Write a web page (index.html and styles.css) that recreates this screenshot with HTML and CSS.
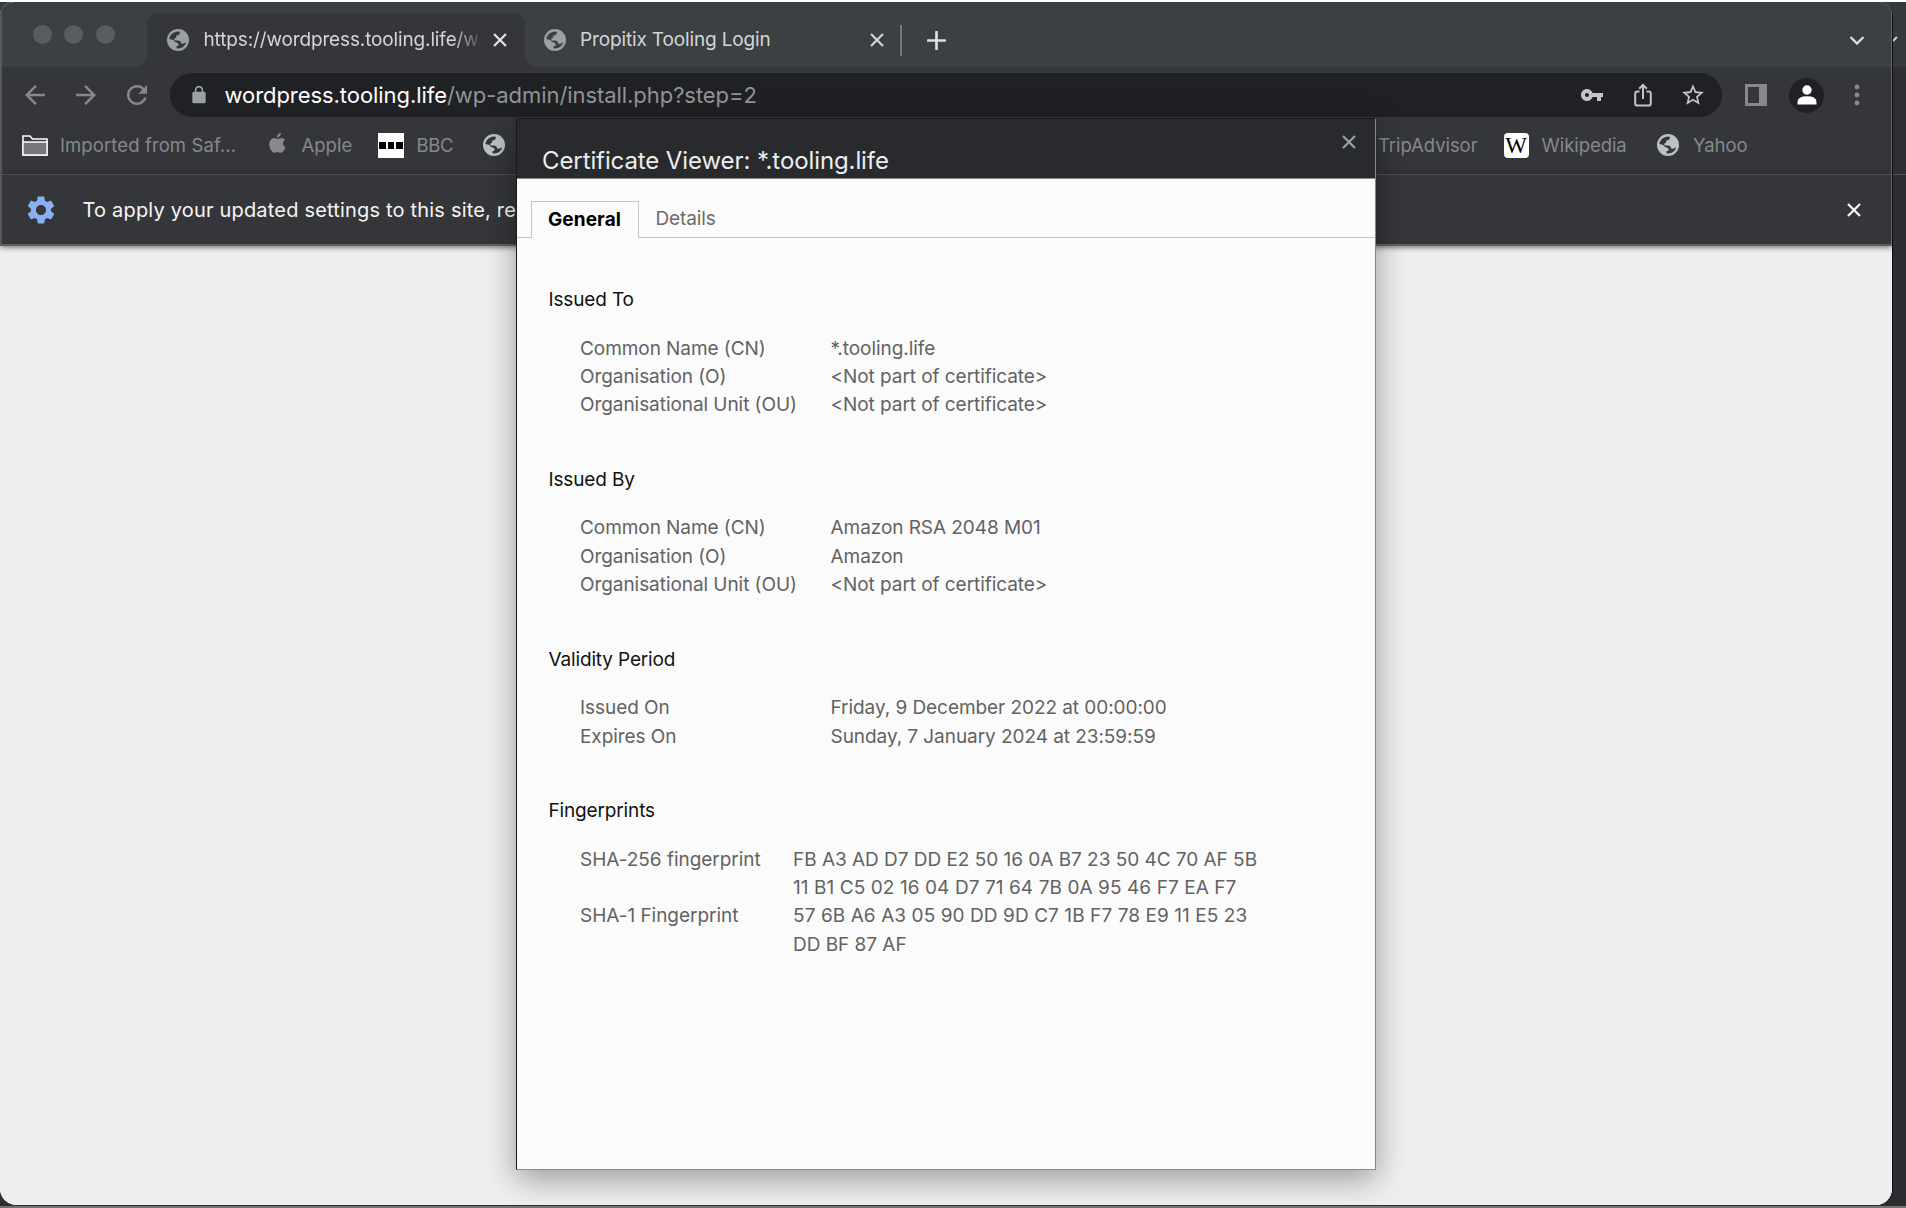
FILE: index.html
```html
<!DOCTYPE html>
<html lang="en">
<head>
<meta charset="utf-8">
<title>Certificate Viewer</title>
<link rel="stylesheet" href="styles.css">
</head>
<body>
<svg width="0" height="0" class="defs">
  <symbol id="globe" viewBox="0 0 22 22">
    <circle cx="11" cy="11" r="11" fill="currentColor"/>
    <path d="M2.4 10C2.8 6 6.400 2.700 11 2.500l2 .4-.5 2.100-1.300 1.200-2 .2v2.200l-1.800.9v2h4.200l1.900 1.100.6 1.900 2.100.2 3-1.400C18.300 17 15 19.500 11 19.500l-1.500-.3v-1.900l1.900-.5.3-1.700-1.700-1.700-2.200-.3-1.400-2.100z" fill="var(--hole)"/>
  </symbol>
  <symbol id="cross" viewBox="0 0 14 14">
    <path d="M1 1l12 12M13 1L1 13" fill="none" stroke="currentColor" stroke-width="2.200"/>
  </symbol>
</svg>

<div class="backdrop">
  <div class="back-tabs"><svg width="5" height="9" viewBox="0 0 5 9"><path d="M0 6l4-4" stroke="#d0d2d4" stroke-width="2"/></svg></div>
  <div class="back-tools"></div>
  <div class="back-page"></div>
</div>

<div class="window">
  <div class="tabstrip">
    <div class="lights"><i></i><i></i><i></i></div>
    <div class="tab active">
      <svg class="globe"><use href="#globe"/></svg>
      <span class="tab-title fade">https://wordpress.tooling.life/w</span>
      <svg class="x"><use href="#cross"/></svg>
    </div>
    <div class="tab second">
      <svg class="globe"><use href="#globe"/></svg>
      <span class="tab-title">Propitix Tooling Login</span>
      <svg class="x"><use href="#cross"/></svg>
    </div>
    <div class="tab-sep"></div>
    <svg class="plus" width="19" height="19" viewBox="0 0 19 19"><path d="M9.500 1v17M1 9.500h17" stroke="#dcdee0" stroke-width="2.700" stroke-linecap="round"/></svg>
    <svg class="chevron" width="16" height="11" viewBox="0 0 16 11"><path d="M1.500 2L8 8.600 14.500 2" fill="none" stroke="#d9dbdd" stroke-width="2.300"/></svg>
  </div>

  <div class="toolbar">
    <svg class="nav" viewBox="0 0 24 24"><path d="M20 11H7.830l5.590-5.590L12 4l-8 8 8 8 1.410-1.410L7.830 13H20v-2z"/></svg>
    <svg class="nav" viewBox="0 0 24 24"><path d="M12 4l-1.410 1.410L16.170 11H4v2h12.170l-5.580 5.590L12 20l8-8z"/></svg>
    <svg class="nav" viewBox="0 0 24 24"><path d="M17.650 6.350C16.200 4.900 14.210 4 12 4c-4.420 0-7.990 3.580-7.990 8s3.570 8 7.990 8c3.730 0 6.840-2.550 7.730-6h-2.080c-.82 2.330-3.040 4-5.650 4-3.310 0-6-2.690-6-6s2.690-6 6-6c1.660 0 3.140.69 4.220 1.780L13 11h7V4l-2.350 2.350z"/></svg>
    <div class="omnibox">
      <svg class="lock" viewBox="0 0 24 24"><path d="M18 8h-1V6c0-2.760-2.240-5-5-5S7 3.240 7 6v2H6c-1.100 0-2 .9-2 2v10c0 1.100.9 2 2 2h12c1.100 0 2-.9 2-2V10c0-1.100-.9-2-2-2zM8.900 8V6c0-1.710 1.390-3.100 3.100-3.100s3.100 1.390 3.100 3.100v2z"/></svg>
      <span class="url"><b>wordpress.tooling.life</b>/wp-admin/install.php?step=2</span>
      <svg class="key" viewBox="0 0 24 24"><path d="M12.650 10C11.830 7.670 9.610 6 7 6c-3.310 0-6 2.690-6 6s2.690 6 6 6c2.610 0 4.830-1.670 5.650-4H17v4h4v-4h2v-4H12.650zM7 14c-1.100 0-2-.9-2-2s.9-2 2-2 2 .9 2 2-.9 2-2 2z"/></svg>
      <svg class="share" viewBox="0 0 18 24"><path d="M5.500 8.500H3.300Q1.200 8.500 1.200 10.600V20.400Q1.200 22.500 3.300 22.500H14.700Q16.800 22.500 16.800 20.400V10.600Q16.800 8.500 14.700 8.500H12.500M9 16V2M5.200 5.700L9 1.900l3.800 3.800"/></svg>
      <svg class="star" viewBox="0 0 24 24"><path d="M22 9.240l-7.190-.62L12 2 9.190 8.630 2 9.240l5.460 4.730L5.820 21 12 17.270 18.180 21l-1.630-7.030L22 9.240zM12 15.400l-3.760 2.270 1-4.280-3.320-2.880 4.380-.38L12 6.100l1.710 4.040 4.380.38-3.320 2.880 1 4.280L12 15.400z"/></svg>
    </div>
    <svg class="panel" viewBox="0 0 22 22"><path fill-rule="evenodd" d="M0 0h22v22H0zM3 3v16h11V3z"/></svg>
    <div class="avatar"><svg width="20" height="20" viewBox="0 0 20 20"><circle cx="10" cy="5" r="4.700" fill="#fff"/><path d="M.5 19.500V17Q.5 11.300 10 11.300T19.500 17v2.500z" fill="#fff"/></svg></div>
    <svg class="dots" viewBox="0 0 6 22"><circle cx="3" cy="3" r="2.400"/><circle cx="3" cy="11" r="2.400"/><circle cx="3" cy="19" r="2.400"/></svg>
  </div>

  <div class="bookmarks">
    <svg class="folder" viewBox="0 0 26 21"><path d="M1 20V1h7l2.500 3H25v16z" fill="#36373b" stroke="#fff" stroke-width="1.500"/><path d="M1 7h24v13H1z" fill="#77787b" stroke="#fff" stroke-width="1.300"/></svg>
    <span class="bm-folder">Imported from Saf...</span>
    <svg class="apple" viewBox="0 0 17 21"><path d="M11.900 0c.2 2.300-1.700 4.400-3.900 4.400C7.700 2.200 9.700.2 11.900 0zM8.600 5.900c.9 0 2-1 3.800-1 1.500 0 2.900.8 3.600 2-3 1.800-2.600 5.900.6 7.200-.8 2.300-2.600 5.600-4.500 5.600-1.300 0-1.800-.8-3.400-.8s-2.200.8-3.400.8C3 19.700.3 15.300.3 11.300c0-4 2.500-6.300 4.900-6.300 1.500 0 2.600.9 3.400.9z"/></svg>
    <span class="bm-apple">Apple</span>
    <span class="bbc"><i></i><i></i><i></i></span>
    <span class="bm-bbc">BBC</span>
    <svg class="globe bm-globe"><use href="#globe"/></svg>
    <div class="bm-right">
      <span>TripAdvisor</span>
      <span class="wiki">W</span>
      <span class="bm-wiki">Wikipedia</span>
      <svg class="globe"><use href="#globe"/></svg>
      <span class="bm-yahoo">Yahoo</span>
    </div>
  </div>

  <div class="infobar">
    <svg class="gear" viewBox="2 2 20 20"><path d="M19.140 12.940c.04-.3.060-.61.060-.94 0-.32-.02-.64-.07-.94l2.030-1.580c.18-.14.230-.41.120-.61l-1.920-3.320c-.12-.22-.37-.29-.59-.22l-2.390.96c-.5-.38-1.030-.7-1.620-.94l-.36-2.540c-.04-.24-.24-.41-.48-.41h-3.840c-.24 0-.43.17-.47.41l-.36 2.540c-.59.240-1.130.57-1.620.94l-2.390-.96c-.22-.08-.47 0-.59.22L2.740 8.870c-.12.210-.08.470.12.610l2.030 1.580c-.05.3-.09.63-.09.94s.02.640.07.940l-2.030 1.580c-.18.140-.23.410-.12.610l1.920 3.320c.12.220.37.290.59.220l2.390-.96c.5.380 1.030.7 1.620.94l.36 2.540c.05.240.24.410.48.410h3.840c.24 0 .44-.17.47-.41l.36-2.540c.59-.24 1.130-.56 1.620-.94l2.390.96c.22.080.47 0 .59-.22l1.920-3.320c.12-.22.070-.47-.12-.61l-2.010-1.580zM12 15.600c-1.980 0-3.600-1.620-3.600-3.600s1.620-3.600 3.600-3.600 3.600 1.620 3.600 3.600-1.620 3.600-3.600 3.600z"/></svg>
    <span class="message">To apply your updated settings to this site, re</span>
    <svg class="x"><use href="#cross"/></svg>
  </div>

  <div class="page"></div>

  <div class="dialog">
    <div class="dialog-head">
      <h1>Certificate Viewer: *.tooling.life</h1>
      <svg class="x"><use href="#cross"/></svg>
    </div>
    <div class="dialog-tabs"><span class="on">General</span><span class="off">Details</span></div>
    <div class="details">
      <section><h2>Issued To</h2>
        <dl><dt>Common Name (CN)</dt><dd>*.tooling.life</dd>
        <dt>Organisation (O)</dt><dd>&lt;Not part of certificate&gt;</dd>
        <dt>Organisational Unit (OU)</dt><dd>&lt;Not part of certificate&gt;</dd></dl></section>
      <section><h2>Issued By</h2>
        <dl><dt>Common Name (CN)</dt><dd>Amazon RSA 2048 M01</dd>
        <dt>Organisation (O)</dt><dd>Amazon</dd>
        <dt>Organisational Unit (OU)</dt><dd>&lt;Not part of certificate&gt;</dd></dl></section>
      <section><h2>Validity Period</h2>
        <dl><dt>Issued On</dt><dd>Friday, 9 December 2022 at 00:00:00</dd>
        <dt>Expires On</dt><dd>Sunday, 7 January 2024 at 23:59:59</dd></dl></section>
      <section><h2>Fingerprints</h2>
        <dl class="prints"><dt>SHA-256 fingerprint</dt><dd>FB A3 AD D7 DD E2 50 16 0A B7 23 50 4C 70 AF 5B<br><span class="wide">11 B1 C5 02 16 04 D7 71 64 7B 0A 95 46 F7 EA F7</span></dd>
        <dt>SHA-1 Fingerprint</dt><dd><span class="wide">57 6B A6 A3 05 90 DD 9D C7 1B F7 78 E9 11 E5 23</span><br>DD BF 87 AF</dd></dl></section>
    </div>
  </div>
</div>
</body>
</html>
```
FILE: styles.css
```css
* { box-sizing: border-box; }
body {
  margin: 0; width: 1906px; height: 1208px; overflow: hidden; position: relative;
  font-family: "Inter", "Liberation Sans", sans-serif; font-size: 19px;
  background: #fff; padding-top: 2px;
}
svg { display: block; flex: none; }
span { white-space: nowrap; }
.defs { position: absolute; }

/* edge of the window that sits behind this one */
.backdrop { position: absolute; inset: 2px 0 0 0; background: #2d2e32; border-bottom: 2px solid #747474; }
.back-tabs { height: 65px; background: #373a3d; padding: 33px 0 0 1893px; }
.back-tools { height: 108px; background: #2f3034; border-bottom: 1px solid #55565a; }

.window {
  position: relative; width: 1893px; height: 1204px; overflow: hidden;
  display: flex; flex-direction: column;
  border-radius: 14px 14px 17px 17px; background: #efefef;
  border-right: 1px solid #0c0c0d; border-bottom: 1px solid #303030;
}
.window > .tabstrip, .window > .toolbar, .window > .bookmarks, .window > .infobar {
  border-left: 2px solid #57595c; border-right: 1px solid #66686a;
}

.tabstrip { --hole: #35363a; height: 65px; flex: none; display: flex; background: #3c4043; }
.lights { display: flex; gap: 12.700px; padding: 22.500px 0 0 30.500px; width: 145px; }
.lights i { width: 19px; height: 19px; border-radius: 50%; background: #5a5d60; }
.tab { display: flex; align-items: center; height: 54px; margin-top: 11px; color: #d3d5d7; }
.tab .globe { color: #9aa0a6; }
.active { position: relative; width: 378px; background: #35363a; border-radius: 12px 12px 0 0; padding-left: 20px; }
.active::before, .active::after {
  content: ""; position: absolute; bottom: 0; width: 12px; height: 12px;
}
.active::before { left: -12px; background: radial-gradient(circle at 0 0, transparent 11.500px, #35363a 12px); }
.active::after { right: -12px; background: radial-gradient(circle at 100% 0, transparent 11.500px, #35363a 12px); }
.globe { width: 22px; height: 22px; --hole: #35363a; }
.second .globe { --hole: #3c4043; }
.tab-title { letter-spacing: -0.140px; margin-left: 14px; margin-top: -1px; }
.fade {
  width: 276px;
  -webkit-mask-image: linear-gradient(90deg, #000 248px, transparent 280px);
  mask-image: linear-gradient(90deg, #000 248px, transparent 280px);
}
.active .tab-title { margin-left: 14.500px; }
.x { width: 14px; height: 14px; }
.active .x { margin-left: 13px; color: #e3e4e6; }
.second { width: 375px; padding-left: 19px; }
.second .x { margin-left: auto; margin-right: 16.500px; }
.tab-sep { width: 2px; height: 31px; background: #75787b; margin-top: 23px; }
.plus { margin: 29px 0 0 25px; }
.chevron { margin: 33px 26px 0 auto; }

.toolbar { height: 58px; flex: none; display: flex; align-items: center; background: #35363a; padding: 0 0 2px 17.500px; }
.nav { width: 30px; height: 30px; margin-right: 21px; fill: #86888b; }
.omnibox { width: 1552px; height: 44px; margin-left: -2.500px; border-radius: 22px; background: #202124; display: flex; align-items: center; padding-left: 18.500px; }
.lock { width: 20px; height: 20px; fill: #9aa0a6; }
.url { font-size: 22px; letter-spacing: -0.060px; color: #929497; margin-left: 16px; margin-right: auto; }
.url b { font-weight: 400; color: #fff; }
.key { width: 24px; height: 24px; fill: #c2c4c6; }
.share { width: 18px; height: 24px; margin-left: 29.500px; fill: none; stroke: #c2c4c6; stroke-width: 2; }
.star { width: 26px; height: 26px; margin: 0 16px 0 28.500px; fill: #c2c4c6; }
.panel { width: 22px; height: 22px; margin-left: 23px; fill: #88898b; }
.avatar { width: 35px; height: 35px; margin-left: 22px; border-radius: 50%; background: #202124; display: flex; align-items: center; justify-content: center; }
.dots { width: 6px; height: 22px; margin-left: 30px; fill: #88898b; }

.bookmarks { height: 50px; flex: none; display: flex; align-items: center; background: #35363a; border-bottom: 1px solid #606165; font-size: 18.500px; color: #85898c; padding: 0 0 9px 20px; }
.bookmarks .globe { color: #bdc1c6; }
.folder { width: 26px; height: 21px; }
.bm-folder { width: 176px; margin-left: 12px; letter-spacing: 0.100px; }
.apple { width: 17px; height: 21px; margin: -3px 0 0 32.500px; fill: #88898b; }
.bm-apple { width: 51px; margin-left: 16px; }
.bbc { width: 26px; height: 25px; margin-left: 25.500px; background: #fff; display: flex; gap: 2px; align-items: center; justify-content: center; }
.bbc i { width: 6.500px; height: 7px; background: #000; }
.bm-bbc { width: 37px; margin-left: 12.500px; letter-spacing: -0.300px; }
.bm-globe { margin-left: 29px; }
.bm-right { display: flex; align-items: center; margin-left: 873.500px; }
.bm-right > span { letter-spacing: -0.060px; }
.bm-right .wiki { width: 25px; height: 25px; margin-left: 26px; border-radius: 4px; background: #fff; color: #000; font: 23px/25px "Liberation Serif", serif; letter-spacing: 0; display: flex; justify-content: center; }
.bm-wiki { margin-left: 13px; width: 88px; }
.bm-right .globe { margin-left: 27px; }
.bm-yahoo { margin-left: 14.500px; }

.infobar { position: relative; z-index: 1; height: 71px; flex: none; display: flex; align-items: center; background: #35363a; border-bottom: 2px solid #5f6064; padding: 0 30px 0 25px; box-shadow: 0 1px 6px rgba(0,0,0,.6); }
.gear { width: 28px; height: 28px; fill: #8ab0f4; }
.message { font-size: 20px; letter-spacing: 0.190px; color: #f5f5f6; margin: 1px 0 0 27.500px; }
.infobar .x { margin-left: auto; color: #fff; }

.page { flex: 1; background: #efefef; }

.dialog {
  position: absolute; z-index: 2; left: 516px; top: 116px; width: 860px; height: 1052px;
  display: flex; flex-direction: column; background: #fbfbfb;
  border: 1px solid #18191b; border-right-color: #858585; border-bottom-color: #8c8c8c;
  box-shadow: 0 9px 30px rgba(0,0,0,.36);
}
.dialog-head { height: 60px; flex: none; display: flex; background: #292a2d; border-bottom: 1px solid #8b868a; }
h1 { margin: 27px 0 0 25px; font-size: 24px; line-height: 29px; font-weight: 400; letter-spacing: -0.100px; color: #eceded; }
.dialog-head .x { margin: 16px 19px 0 auto; color: #9aa0a6; }
.dialog-tabs { height: 59px; flex: none; display: flex; align-items: flex-end; padding-left: 14px; border-bottom: 1px solid #c4c4c4; }
.on { width: 107.500px; height: 37px; margin-bottom: -1px; padding-left: 16px; line-height: 36px; font-weight: 700; letter-spacing: 0.100px; color: #000; background: #fbfbfb; border: 1px solid #c4c4c4; border-bottom: 0; }
.off { height: 36px; line-height: 36px; margin-left: 17px; color: #6b6b6b; letter-spacing: -0.100px; }
.details { display: flex; flex-direction: column; gap: 45.900px; padding: 47.900px 0 0 31.500px; line-height: 28.400px; letter-spacing: -0.060px; }
h2 { margin: 0 0 20.300px; font-size: 19px; font-weight: 400; line-height: 28.400px; color: #111; letter-spacing: -0.150px; }
dl { margin: 0 0 0 31.500px; display: grid; grid-template-columns: 250.500px auto; justify-content: start; color: #626262; }
dd { margin: 0; }
.prints { grid-template-columns: 213px auto; letter-spacing: -0.030px; }
.wide { letter-spacing: 0.080px; }
```
